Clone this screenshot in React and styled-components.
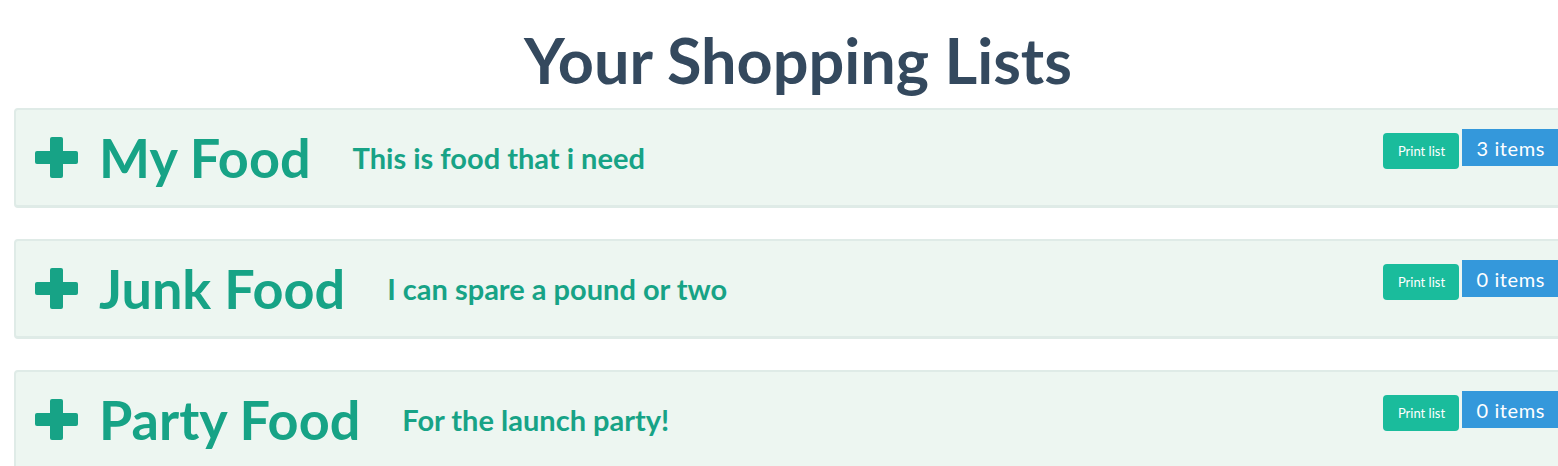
import React from "react";
import styled, { createGlobalStyle } from "styled-components";

const GlobalStyle = createGlobalStyle`
	html, body {
		margin: 0;
		padding: 0;
		overflow: hidden;
		background: #fff;
		font-family: Lato, "Open Sans", sans-serif;
	}
`;

const Page = styled.div`
	width: 1596px;
	padding: 0 14px;
	box-sizing: border-box;
`;

const Heading = styled.h1`
	margin: 0;
	padding-top: 28px;
	height: 108px;
	box-sizing: border-box;
	text-align: center;
	font-size: 63px;
	font-weight: 700;
	line-height: 64px;
	color: #34495e;
`;

const Lists = styled.div`
	display: flex;
	flex-direction: column;
	gap: 31px;
`;

const Panel = styled.div`
	display: flex;
	align-items: flex-start;
	height: 100px;
	box-sizing: border-box;
	background: #edf6f1;
	border: 2px solid #dfebe7;
	border-bottom-width: 3px;
	border-radius: 4px;
	padding: 0 0 0 19px;
`;

const TitleRow = styled.div`
	flex: 1;
	display: flex;
	align-items: center;
	height: 100%;
	color: #17a386;
`;

const Title = styled.h2`
	display: flex;
	align-items: center;
	gap: 21px;
	margin: 0;
	font-size: 54px;
	font-weight: 700;
	line-height: 60px;
	color: inherit;
`;

const Sub = styled.span`
	margin-left: 42px;
	font-size: 29px;
	font-weight: 700;
	color: inherit;
`;

const Actions = styled.div`
	display: flex;
	align-items: flex-start;
	gap: 3px;
	padding-top: 19px;
`;

const PrintButton = styled.button`
	margin-top: 4px;
	width: 76px;
	height: 36px;
	border: none;
	border-radius: 4px;
	background: #1abc9c;
	color: #fff;
	font-family: Lato, sans-serif;
	font-size: 13px;
	padding: 0;
`;

const Badge = styled.span`
	display: flex;
	align-items: center;
	height: 37px;
	padding: 0 35px 0 14px;
	background: #3498db;
	color: #fff;
	font-size: 20px;
	letter-spacing: 0.6px;
	white-space: nowrap;
`;

const Plus = () => (
	<svg width="43" height="41" viewBox="0 0 43 41">
		<rect x="15" y="0" width="13" height="41" rx="2" fill="currentColor" />
		<rect x="0" y="14" width="43" height="13" rx="2" fill="currentColor" />
	</svg>
);

const lists = [
	{ name: "My Food", desc: "This is food that i need", count: 3 },
	{ name: "Junk Food", desc: "I can spare a pound or two", count: 0 },
	{ name: "Party Food", desc: "For the launch party!", count: 0 },
];

const App = () => {
	return (
		<Page>
			<GlobalStyle />
			<Heading>Your Shopping Lists</Heading>
			<Lists>
				{lists.map((l) => (
					<Panel key={l.name}>
						<TitleRow>
							<Title>
								<Plus />
								{l.name}
							</Title>
							<Sub>{l.desc}</Sub>
						</TitleRow>
						<Actions>
							<PrintButton>Print list</PrintButton>
							<Badge>{l.count} items</Badge>
						</Actions>
					</Panel>
				))}
			</Lists>
		</Page>
	);
};

export default App;
